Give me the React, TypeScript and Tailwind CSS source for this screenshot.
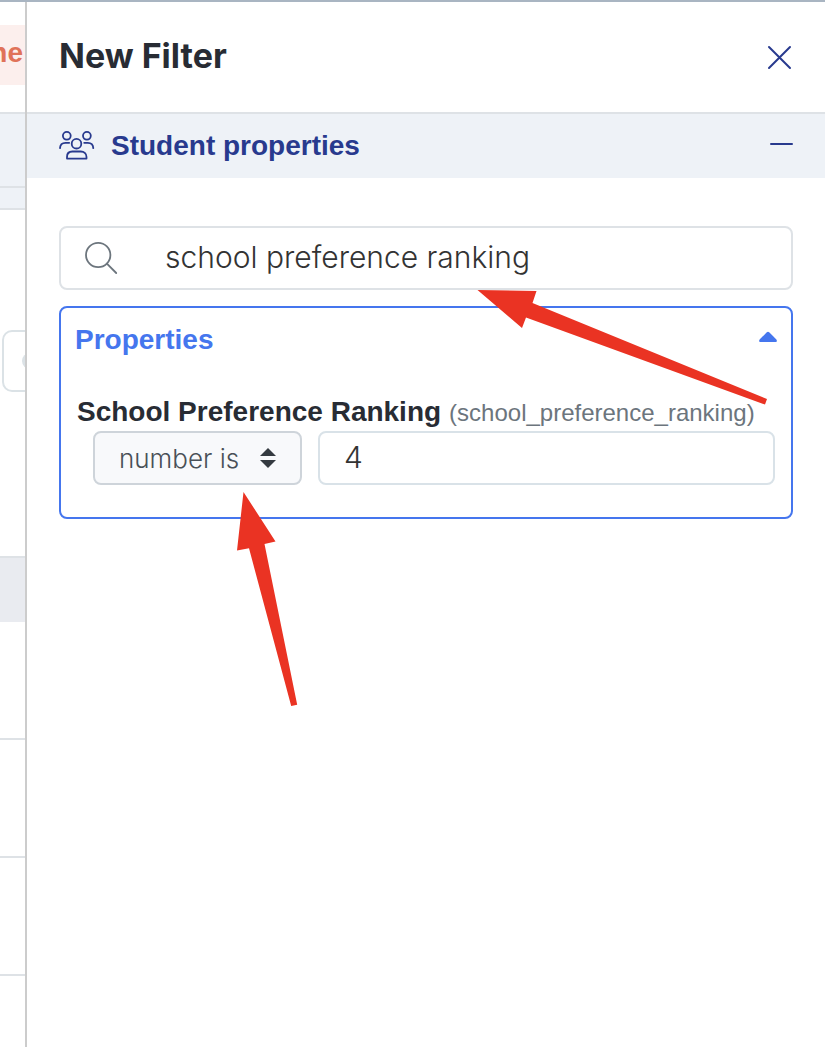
import React, { useState } from 'react';

const OPERATORS = ['number is', 'number is not', 'greater than', 'less than'];

function PeopleIcon() {
  return (
    <svg viewBox="0 0 36 30" className="h-[30px] w-9 shrink-0" fill="none" stroke="currentColor" strokeWidth="1.8" strokeLinecap="round" strokeLinejoin="round">
      <circle cx="7.8" cy="4.8" r="3.9" />
      <circle cx="27.9" cy="4.8" r="3.9" />
      <circle cx="17.5" cy="12.7" r="4.8" />
      <path d="M1 17.1 C1.2 13.3 4 11.8 6.5 11.8 H10.2" />
      <path d="M34.3 17.1 C34.1 13.3 31.3 11.8 28.8 11.8 H25.2" />
      <path d="M8 27.6 V25.9 C8 22.5 10.3 20.5 13.4 20.5 H21.8 C24.9 20.5 27.5 22.5 27.5 25.9 V27.6 Z" />
    </svg>
  );
}

function SearchIcon() {
  return (
    <svg viewBox="0 0 34 34" className="h-[34px] w-[34px] shrink-0 text-[#6c757d]" fill="none" stroke="currentColor" strokeWidth="1.8" strokeLinecap="round">
      <circle cx="13.2" cy="14" r="12.2" />
      <path d="M21.9 22.7 L31.2 32" />
    </svg>
  );
}

function BackgroundPage() {
  return (
    <div className="flex w-[25px] shrink-0 flex-col overflow-hidden">
      <div className="mt-[23px] flex h-[60px] items-center justify-end bg-[#fcefed] pr-0.5 pb-1 text-[28px] font-bold text-[#e07259]">
        ne
      </div>
      <div className="mt-[27px] h-[74px] border-t-2 border-[#dee2e6] bg-[#eef2f7]" />
      <div className="h-6 border-y-2 border-[#dee2e6] bg-[#eef2f7]" />
      <div className="mt-[120px] ml-0.5 flex h-[62px] w-20 items-center rounded-[10px] border-2 border-[#dbe2e6] pl-[18px]">
        <div className="h-4 w-4 rounded-full bg-[#dbe2e6]" />
      </div>
      <div className="mt-[164px] h-[66px] border-t-2 border-[#dee2e6] bg-[#e9ebf0]" />
      <div className="mt-[116px] h-[118px] border-t-2 border-[#dee2e6]" />
      <div className="h-[118px] border-t-2 border-[#dee2e6]" />
      <div className="grow border-t-2 border-[#dee2e6]" />
    </div>
  );
}

function Arrows() {
  return (
    <svg viewBox="0 2 825 718" width="825" height="718" className="pointer-events-none absolute top-0 left-0" fill="#ea3323" aria-hidden="true">
      <polygon points="477.5,290 536.5,291 532.5,303 767,399 765,404.5 526,317.5 522,328" />
      <polygon points="243.5,492 275.5,541.5 264.5,544 297.2,704.8 291.2,706 249,548.2 237,550.5" />
    </svg>
  );
}

export default function App() {
  const [search, setSearch] = useState('school preference ranking');
  const [operator, setOperator] = useState('number is');
  const [value, setValue] = useState('4');

  return (
    <div className="relative flex min-h-screen overflow-hidden border-t-2 border-[#a9b5c2] bg-white font-['Liberation_Sans',Arial,sans-serif]">
      <BackgroundPage />

      <section className="min-w-0 grow border-l-2 border-[#cccccc]">
        <header className="flex h-[110px] items-center justify-between px-8">
          <h1 className="pb-1 font-['Inter',sans-serif] text-[34px] font-bold text-[#282c34]">New Filter</h1>
          <button type="button" aria-label="Close" className="text-[#283a8e]">
            <svg viewBox="0 0 26 26" className="h-[26px] w-[26px]" fill="none" stroke="currentColor" strokeWidth="2" strokeLinecap="round">
              <path d="M2 3 L23 24 M23 3 L2 24" />
            </svg>
          </button>
        </header>

        <button type="button" className="flex h-[66px] w-full items-center border-t-2 border-[#dee2e6] bg-[#eef2f7] px-8 text-[#283a8e]">
          <PeopleIcon />
          <span className="ml-4 text-[28px] font-bold">Student properties</span>
          <svg viewBox="0 0 24 4" className="mb-1 ml-auto h-1 w-6" stroke="currentColor" strokeWidth="2" strokeLinecap="round">
            <path d="M2 2 H23" />
          </svg>
        </button>

        <div className="flex flex-col gap-4 px-8 pt-12">
          <label className="flex h-16 items-center rounded-lg border-2 border-[#dee2e6] pl-6">
            <SearchIcon />
            <input
              aria-label="Search properties"
              value={search}
              onChange={(e) => setSearch(e.target.value)}
              className="ml-[46px] h-full min-w-0 grow bg-transparent pb-0.5 font-['Inter',sans-serif] text-[30px] font-light text-[#333333] outline-none"
            />
          </label>

          <div className="rounded-lg border-2 border-[#4576ee] pb-8">
            <button type="button" className="flex h-16 w-full items-center justify-between px-3.5 text-[28px] font-bold text-[#4576ee]">
              Properties
              <svg viewBox="0 0 18 12" className="mb-1.5 h-3 w-[18px]" fill="currentColor">
                <path d="M7.8 1.2 Q9 0.2 10.2 1.2 L17.4 8.6 Q18.6 10.6 16.8 11 H1.2 Q-0.6 10.6 0.6 8.6 Z" />
              </svg>
            </button>

            <div className="mt-6 mb-[3px] flex h-8 items-center gap-2 px-4 whitespace-nowrap">
              <label htmlFor="ranking" className="text-[28px] font-bold text-[#282c34]">School Preference Ranking</label>
              <span className="pt-0.5 text-2xl text-[#6c757d]">(school_preference_ranking)</span>
            </div>

            <div className="flex gap-4 pr-4 pl-8">
              <div className="relative w-[209px] shrink-0">
                <select
                  aria-label="Operator"
                  value={operator}
                  onChange={(e) => setOperator(e.target.value)}
                  className="h-[54px] w-full appearance-none rounded-lg border-2 border-[#ced4da] bg-[#f8f9fb] pl-6 font-['Inter',sans-serif] text-[26px] font-light text-[#495057]"
                >
                  {OPERATORS.map((o) => (
                    <option key={o}>{o}</option>
                  ))}
                </select>
                <svg viewBox="0 0 16 20" className="pointer-events-none absolute top-[17px] right-[26px] h-5 w-4" fill="#343a40">
                  <path d="M8 0 L16 8 H0 Z M0 12 H16 L8 20 Z" />
                </svg>
              </div>
              <input
                id="ranking"
                value={value}
                onChange={(e) => setValue(e.target.value)}
                className="h-[54px] min-w-0 grow rounded-lg border-2 border-[#d9e2e8] pb-0.5 pl-6 font-['Inter',sans-serif] text-[30px] font-light text-[#333333] outline-none"
              />
            </div>
          </div>
        </div>
      </section>

      <Arrows />
    </div>
  );
}
